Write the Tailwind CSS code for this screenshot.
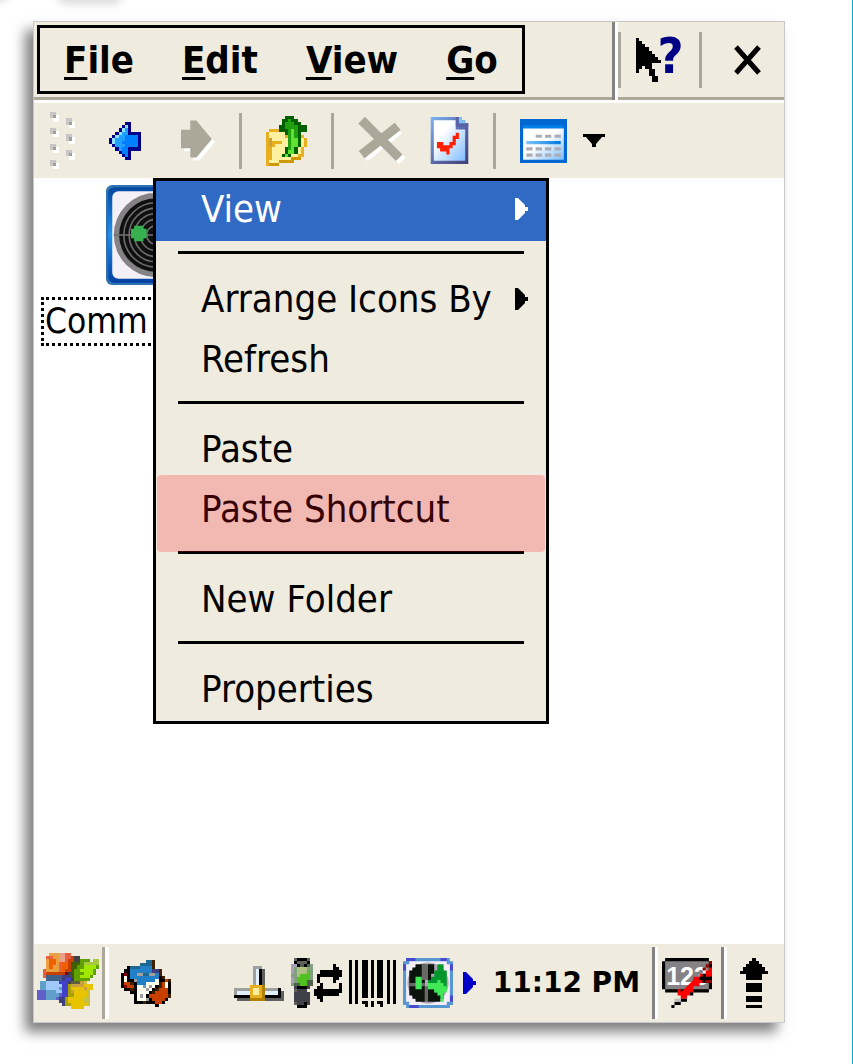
<!DOCTYPE html>
<html lang="en">
<head>
    <meta charset="UTF-8">
    <meta name="viewport" content="width=device-width, initial-scale=1.0">
    <title>File Explorer</title>
    <script src="https://cdn.jsdelivr.net/npm/@tailwindcss/browser@4"></script>
</head>
<body class="relative flex min-h-screen flex-col overflow-x-hidden border-r border-[#00aeef] bg-white font-['DejaVu_Sans_Condensed','DejaVu_Sans',sans-serif] text-black">
    <!-- Soft shadows at the top edge -->
    <div class="absolute -top-3 left-[58px] h-4 w-16 rounded-full bg-black/15 blur-[5px]"></div>
    <div class="absolute -top-3 -left-4 h-3 w-6 rounded-full bg-black/20 blur-[4px]"></div>

    <!-- Device window -->
    <div class="mt-[21px] mr-[67px] mb-[41px] ml-[33px] flex flex-1 flex-col border border-[#c8c8c8] bg-white shadow-[-8px_9px_12px_rgba(0,0,0,0.5)]">

        <!-- Menu bar -->
        <header class="flex h-[81px] shrink-0 border-b-[3px] border-white bg-[#efebde]">
            <div class="flex flex-1 items-start border-b-[3px] border-[#aca899] pt-[3px] pl-[3px]">
                <nav class="flex h-[69px] items-center gap-12 border-[3px] border-black px-6 text-[38px] leading-none font-bold">
                    <button><u class="decoration-[3px] underline-offset-[4px]">F</u>ile</button>
                    <button><u class="decoration-[3px] underline-offset-[4px]">E</u>dit</button>
                    <button><u class="decoration-[3px] underline-offset-[4px]">V</u>iew</button>
                    <button><u class="decoration-[3px] underline-offset-[4px]">G</u>o</button>
                </nav>
            </div>
            <div class="w-[3px] bg-[#848284]"></div>
            <div class="w-[3px] bg-white"></div>
            <div class="flex w-[166px] items-center border-b-[3px] border-[#aca899]">
                <div class="h-14 w-[3px] bg-[#aca899]"></div>
                <button class="flex flex-1 items-center justify-center" aria-label="Help">
                    <svg class="h-[44px] w-[25px]" viewBox="0 0 8 14" preserveAspectRatio="none" shape-rendering="crispEdges">
                        <path d="M0 0h1v1h1v1h1v1h1v1h1v1h1v1h1v1h1v1H5v2h1v2h1v2H5v-2H4v-2H3V9H2v1H1v1H0z"/>
                    </svg>
                    <span class="-ml-1 pb-2 text-[50px] leading-[50px] font-bold text-[#000084]">?</span>
                </button>
                <div class="h-14 w-[3px] bg-[#aca899]"></div>
                <button class="flex w-[82px] justify-center pl-2" aria-label="Close">
                    <svg class="h-[30px] w-[27px]" viewBox="0 0 27 30" fill="none" stroke="#000" stroke-width="5">
                        <path d="M2 2l23 26M25 2L2 28"/>
                    </svg>
                </button>
            </div>
        </header>

        <!-- Toolbar -->
        <div class="flex h-[75px] shrink-0 items-center gap-6 bg-[#efebde] pl-4">
            <svg class="mr-[10px] h-[57px] w-[25px]" viewBox="0 0 8 18" preserveAspectRatio="none" shape-rendering="crispEdges">
                <path fill="#fff" d="M1 1h2v2H1zM1 6h2v2H1zM1 11h2v2H1zM1 16h2v2H1zM6 3h2v2H6zM6 8h2v2H6zM6 13h2v2H6z"/>
                <path fill="#c6c6c6" d="M0 0h2v2H0zM0 5h2v2H0zM0 10h2v2H0zM0 15h2v2H0zM5 2h2v2H5zM5 7h2v2H5zM5 12h2v2H5z"/>
                <path fill="#a09e98" d="M1 1h1v1H1zM1 6h1v1H1zM1 11h1v1H1zM1 16h1v1H1zM6 3h1v1H6zM6 8h1v1H6zM6 13h1v1H6z"/>
            </svg>
            <div class="flex items-center gap-10">
                <button aria-label="Back"><svg class="h-[38px] w-[32px]" data-sprite="back"></svg></button>
                <button aria-label="Forward" disabled>
                    <svg class="h-[41px] w-[34px]" viewBox="0 0 11 13">
                        <path fill="#fff" d="M4 1h2l5 6-5 6H4v-3H1V4h3z"/>
                        <path fill="#aca899" d="M3 0h2l5 6-5 6H3V9H0V3h3z"/>
                    </svg>
                </button>
            </div>
            <div class="h-14 w-[3px] bg-[#aca899]"></div>
            <button aria-label="Up one level"><svg class="h-[50px] w-[41px]" data-sprite="folder"></svg></button>
            <div class="h-14 w-[3px] bg-[#aca899]"></div>
            <button aria-label="Delete" disabled>
                <svg class="h-[47px] w-[48px]" viewBox="0 0 15 15" fill="none" stroke-width="3">
                    <path stroke="#fff" d="M2 2l12 12M13 4L2 13"/>
                    <path stroke="#aca899" d="M1 1l12 12M12.500 3L1 12"/>
                </svg>
            </button>
            <button aria-label="Properties">
                <svg class="h-[47px] w-[39px]" viewBox="0 0 12 15">
                    <defs>
                        <linearGradient id="pageFill" x1="0" y1="0" x2="1" y2="1">
                            <stop offset=".3" stop-color="#fff"/><stop offset="1" stop-color="#80bcff"/>
                        </linearGradient>
                        <linearGradient id="pageEdge" x1="0" y1="0" x2="1" y2="1">
                            <stop offset="0" stop-color="#7cb4f4"/><stop offset=".6" stop-color="#5860a0"/><stop offset="1" stop-color="#404078"/>
                        </linearGradient>
                    </defs>
                    <path fill="url(#pageEdge)" d="M0 0h10v1h1v1h1v13H0z"/>
                    <path fill="url(#pageFill)" d="M1 1h7v3h3v10H1z"/>
                    <path fill="#5860a8" d="M8 0h1v2h3v1H8z"/>
                    <path fill="#80c0f0" d="M9 0h1v1h1v1H9z"/>
                    <path fill="#ff2000" d="M2 8h2v1h2V8h1V6h1V5h1v2H8v2H7v1H6v2H5v-1H3v-1H2z"/>
                </svg>
            </button>
            <div class="h-14 w-[3px] bg-[#aca899]"></div>
            <button class="flex items-center gap-4" aria-label="View style">
                <svg class="h-[44px] w-[47px]" viewBox="0 0 15 14">
                    <defs>
                        <linearGradient id="listFill" x1="0" y1="0" x2="1" y2="1">
                            <stop offset=".45" stop-color="#fff"/><stop offset="1" stop-color="#78bcff"/>
                        </linearGradient>
                        <linearGradient id="listRow">
                            <stop offset="0" stop-color="#80c4f8"/><stop offset="1" stop-color="#0078e0"/>
                        </linearGradient>
                    </defs>
                    <path fill="#0068d0" d="M0 0h15v14H0z"/>
                    <path fill="#0080e8" d="M1 2h13v1H1z"/>
                    <path fill="url(#listFill)" d="M1 3h13v10H1z"/>
                    <path fill="url(#listRow)" d="M2 7h11v1H2z"/>
                    <path fill="#adabb5" d="M5 5h2v1H5zM8 5h2v1H8zM11 5h2v1h-2zM2 9h2v1H2zM5 9h2v1H5zM8 9h2v1H8zM11 9h2v1h-2zM2 11h2v1H2zM5 11h2v1H5zM8 11h2v1H8zM11 11h2v1h-2z"/>
                </svg>
                <svg class="h-[13px] w-[22px]" viewBox="0 0 22 13"><path d="M0 0h22v3h-3l-6 7v3H9v-3L3 3H0z"/></svg>
            </button>
        </div>

        <!-- Desktop area -->
        <main class="relative flex-1">
            <button class="mt-[7px] ml-[7px] block w-[230px]">
                <svg class="mx-auto h-[100px] w-[100px]" viewBox="0 0 32 32">
                    <defs>
                        <linearGradient id="tile" x1="0" y1="0" x2="0" y2="1">
                            <stop offset="0" stop-color="#0048a0"/><stop offset=".5" stop-color="#2090f0"/><stop offset="1" stop-color="#0040a0"/>
                        </linearGradient>
                    </defs>
                    <rect width="32" height="32" rx="2" fill="#3070b0"/>
                    <rect x=".7" y=".7" width="30.6" height="30.6" rx="2" fill="url(#tile)"/>
                    <rect x="2" y="2" width="28" height="28" rx="2" fill="#f4f0f8"/>
                    <circle cx="16" cy="16" r="13.5" fill="#848284"/>
                    <circle cx="16" cy="16" r="11.8" fill="#101010"/>
                    <g fill="none" stroke="#707070" stroke-width=".5">
                        <circle cx="16" cy="16" r="10.3"/><circle cx="16" cy="16" r="8.6"/><circle cx="16" cy="16" r="6.9"/><circle cx="16" cy="16" r="5"/><circle cx="16" cy="16" r="3"/>
                        <path d="M2.5 16h27M16 2.5v27"/>
                    </g>
                    <path fill="#38b050" d="M8 14h1v-1h3v1h1v3h-1v1H9v-1H8z"/>
                </svg>
                <span class="mt-3 block h-[49px] border-[3px] border-dotted border-black pl-px text-left text-[35px] leading-[43px]">Comm</span>
            </button>

            <!-- Context menu -->
            <div role="menu" class="absolute top-0 left-[119px] w-[396px] border-[3px] border-black bg-[#efebde] text-[38px] leading-none">
                <button role="menuitem" class="flex h-[60px] w-full items-center justify-between bg-[#316ac5] pr-[18px] pb-1 pl-[45px] text-white">View
                    <svg class="h-[22px] w-[13px]" viewBox="0 0 13 22" fill="currentColor"><path d="M0 0h3l7 7v2h3v4h-3v2l-7 7H0z"/></svg>
                </button>
                <hr class="mx-[22px] mt-[10px] mb-[17px] border-t-[3px] border-black">
                <button role="menuitem" class="flex h-[60px] w-full items-center justify-between pr-[18px] pb-1 pl-[45px]">Arrange Icons By
                    <svg class="h-[22px] w-[13px]" viewBox="0 0 13 22" fill="currentColor"><path d="M0 0h3l7 7v2h3v4h-3v2l-7 7H0z"/></svg>
                </button>
                <button role="menuitem" class="flex h-[60px] w-full items-center pb-1 pl-[45px]">Refresh</button>
                <hr class="mx-[22px] mt-[10px] mb-[17px] border-t-[3px] border-black">
                <button role="menuitem" class="flex h-[60px] w-full items-center pb-1 pl-[45px]">Paste</button>
                <button role="menuitem" class="relative flex h-[60px] w-full items-center pb-1 pl-[45px]">Paste Shortcut
                    <span class="absolute inset-x-px -top-[6px] -bottom-[11px] rounded bg-[#fb0010]/21"></span>
                </button>
                <hr class="mx-[22px] mt-[10px] mb-[17px] border-t-[3px] border-black">
                <button role="menuitem" class="flex h-[60px] w-full items-center pb-1 pl-[45px]">New Folder</button>
                <hr class="mx-[22px] mt-[10px] mb-[17px] border-t-[3px] border-black">
                <button role="menuitem" class="flex h-[60px] w-full items-center pb-1 pl-[45px]">Properties</button>
            </div>
        </main>

        <!-- Taskbar -->
        <footer class="flex h-[78px] shrink-0 items-center bg-[#efebde] pl-[3px]">
            <button aria-label="Start"><svg class="mb-1 h-[56px] w-[62px]" data-sprite="start"></svg></button>
            <div class="ml-[3px] h-[72px] w-[7px] border-r-4 border-l-[3px] border-r-white border-l-[#aca899]"></div>
            <button class="ml-3" aria-label="Sync"><svg class="h-[47px] w-[50px]" data-sprite="sync"></svg></button>
            <div class="ml-auto flex items-center gap-[7px]">
                <svg class="h-[35px] w-[50px]" data-sprite="network"></svg>
                <svg class="h-[50px] w-[22px]" data-sprite="phone"></svg>
                <svg class="-ml-[6px] h-[38px] w-[28px]" data-sprite="swap"></svg>
                <svg class="h-[47px] w-[47px]" viewBox="0 0 15 15" shape-rendering="crispEdges">
                    <path d="M0 0h1v14H0zM2 0h1v14H2zM4 0h2v12H4zM7 0h1v12H7zM9 0h2v12H9zM12 0h1v14h-1zM14 0h1v14h-1zM4 13h2v2H5v-1H4zM7 13h1v2H7zM9 13h2v2h-1v-1H9z"/>
                </svg>
                <svg class="h-[50px] w-[50px]" viewBox="0 0 16 16">
                    <path fill="#5898d0" d="M1 0h14v1h1v14h-1v1H1v-1H0V1h1z"/>
                    <path fill="#4848d0" d="M1 0h3v1H1zM12 0h2v1h-2zM0 2h1v2H0zM15 2h1v2h-1zM15 12h1v2h-1zM2 15h3v1H2z"/>
                    <path fill="#f4eef8" d="M2 1h12v1h1v12h-1v1H2v-1H1V2h1z"/>
                    <circle cx="8" cy="8" r="6.600" fill="#b0a8b4"/>
                    <path fill="#0c120c" d="M4 2h3v12H4v-1H3v-1H2V4h1V3h1zM8 7h2v3h2v1h1v2h-1v1H8z"/>
                    <path fill="#0c120c" d="M8 2h2v3H9v2H8z"/>
                    <path fill="#00982c" d="M11 2h2v2h1v6h-1v3h-1v-2h-2v-1H8V7h1V6h1V4h1z"/>
                    <path fill="#40e858" d="M11 7h1v1h1v1h1v2h-1v3h-1v-2h-1v-1h-1v-1H8V8h3z"/>
                    <path fill="#686868" d="M2 8h5v1H2zM6 2h2v5H6zM7 9h1v5H7z"/>
                    <path fill="#40e858" d="M4 6h2v4H4z"/>
                </svg>
                <svg class="ml-[3px] h-[22px] w-[13px]" viewBox="0 0 13 22" fill="#0000c8"><path d="M0 0h3l7 7v2h3v4h-3v2l-7 7H0z"/></svg>
            </div>
            <time class="ml-[17px] text-[28px] leading-none font-bold font-['DejaVu_Sans']">11:12 PM</time>
            <div class="ml-3 h-[72px] w-[6px] border-r-[3px] border-l-[3px] border-r-white border-l-[#848284]"></div>
            <button class="ml-1" aria-label="Input panel">
                <svg class="h-[50px] w-[50px]" viewBox="0 0 48 48">
                    <path d="M3 0h42v3h3v27h-3v3H3v-3H0V3h3z"/>
                    <path fill="#848284" d="M3 3h42v27H3z"/>
                    <text x="4" y="26" font-size="24" font-weight="bold" font-family="Liberation Sans" fill="#fff">123</text>
                    <g transform="scale(3)">
                        <path fill="#ff0000" d="M5 10h1v1l4-4V6h2V5h2V4h1V3h1v3h-2v2h-2v1h-2v2H9v1H8v1H6v-1H5z"/>
                        <path d="M12 6h1V5h1v1h2v1h-2v1h-1V7h-1zM6 13h2v1H6v1H4v1H3v-1h1v-1h2zM9 11h1v1H9z"/>
                        <path fill="#900000" d="M15 1h1v1h-1v1h-1v1h-1V3h1V2h1zM14 7h2v1h-2z"/>
                        <path fill="#c0c0c0" d="M4 13h2v1H4z"/>
                    </g>
                </svg>
            </button>
            <div class="ml-[9px] h-[72px] w-[6px] border-r-[3px] border-l-[3px] border-r-white border-l-[#848284]"></div>
            <button class="mr-4 ml-[13px]" aria-label="Show desktop">
                <svg class="h-[50px] w-[28px]" viewBox="0 0 9 16" preserveAspectRatio="none" shape-rendering="crispEdges">
                    <path d="M4 0h1v1h1v1h1v1h1v1h1v1H7v2H2V5H0V4h1V3h1V2h1V1h1zM2 8h5v3H2zM2 12h5v2H2zM2 15h5v1H2z"/>
                </svg>
            </button>
        </footer>
    </div>

    <script>
        // One letter per colour, shared by all sprites
        const palette = {
            a: '#e86040', b: '#e8a040', c: '#e8a088', d: '#f06000', e: '#c84000', r: '#800000',
            k: '#404048', g: '#406000', h: '#60a000', l: '#a0e800', m: '#a8c840',
            y: '#e8c400', z: '#c8c040', o: '#a8a000', p: '#c8a040', n: '#606040',
            B: '#4040c8', N: '#404080', s: '#60a0c8', t: '#a0c8f8', v: '#6060c8', w: '#406088',
            K: '#000000', q: '#402000', u: '#2080c8', U: '#206890', W: '#fffff0', O: '#c84000', G: '#a0a0a0',
            L: '#a09fa0', i: '#e0f0ff', D: '#606060', Y: '#e8b020', T: '#fff0a0', j: '#b08000', J: '#d09800',
            A: '#006000', E: '#20a010', F: '#60e030',
            x: '#000088', P: '#20a0ff', Q: '#90e0ff', H: '#0080ff',
            1: '#506050', 2: '#80a080', 3: '#50c020', 4: '#b0c080', 5: '#a8a0b8'
        };

        const sprites = {
            back: [
                '.....xx...', '....xQx...', '...xQPx...', '..xQPPxxxx', '.xQPPHHHHx', 'xQPPPHHHHx',
                'xQPPHHHHHx', '.xPPPHHHHx', '..xPHHxxxx', '...xHHx...', '....xHx...', '.....xx...'
            ],
            folder: [
                '......AAA....', '.....AAEAA...', '.....AEEEAA..', '....AAEEEEAAA', '.YYYAAAEFEAAA', 'YTTTTTAEFEA..',
                'YTTTTTYEFEAY.', 'YpTTTTTEFFATY', 'YpYYYTTEFFATY', 'YpYTTTTEFFATY', 'YYTTTTAEFATY.', 'YYTTTTAFFATY.',
                'YYTTTAFATTYY.', 'YYTTTTTTJJJ..', 'YTTTJJJJJ....', 'YJJJ.........'
            ],
            start: [
                '....bbbccaa.........', '...aabbccaaekk......', '...bddbccaeekkhhh.mm', '...bddbaddeggghmmmmm',
                '...bdbbaddegghhllllh', '..abbbbadeeghhllllh.', '..aeeeeeerkghhhlllh.', '..awwwwwNNNghhlllh..',
                '...wwwwwNBBkhhhhh...', '.ssttttBBBknnnpz....', '.sstttttBBoppppyyy..', '.ssttttsBBoyyyypyy..',
                'vvvsssttBBopyyyyz...', 'vvvssssvBBooyyyyz...', 'vvvsssvNNoyyyyyzz...', '.......NNoyyyyyzz...',
                '........Nooyyyyyz...', '...........yyyy.....'
            ],
            sync: [
                '........UUq.....', '......UUUUq.....', '..KUUUuuuuq.....', '.KKuuuuuuuNNq...', 'KrKuuGGUUGGuq...',
                'KWKuuuuuuuuuKq..', 'KWKKGuuuuuuWKKOq', 'KOOqKuuuWWWWqOWK', 'KrOOKWWsWGWKqOWK', '.KKqKWWWGWKqOOOK',
                '...KKWWWWKqOOOOK', '....KWGWKOOOOOOq', '....KWWWGKOOOOK.', '....KKKqKKKOOK..', '...........K....'
            ],
            network: [
                '......LLL.......', '......LiKD......', '......LiKD......', '......LiKD......', '......LiKD......',
                '......LiKD......', '.....YYYYj......', 'LLLLLYTTYjLLLLK.', 'LiiiiYTTYjiiiiKD', 'KKKKKYYYYjKKKKKD',
                '.DDDDjjjjjDDDDDD'
            ],
            phone: [
                '.DKKKD.', '.KDDDK.', '55K1K12', '5244422', '5244432', '2243332', '5233332', '5233311',
                '2113311', '.kKKKk.', '.Dkkk..', '.kkkkk.', '.kkkkk.', '.kkkkk.', '.DkkKk.', '..KKK..'
            ],
            swap: [
                '......K..', '......KK.', '..KKKKKKK', '.KKKKKKKK', '.K....KK.', '.K....K..',
                '..K.....K', '.KK.....K', 'KKKKKKKKK', 'KKKKKKKK.', '.KK......', '..K......'
            ]
        };

        document.querySelectorAll('[data-sprite]').forEach(svg => {
            const rows = sprites[svg.dataset.sprite];
            svg.setAttribute('viewBox', `0 0 ${rows[0].length} ${rows.length}`);
            svg.setAttribute('preserveAspectRatio', 'none');
            svg.setAttribute('shape-rendering', 'crispEdges');
            svg.innerHTML = rows.map((row, y) => [...row].map((ch, x) =>
                ch === '.' ? '' : `<rect x="${x}" y="${y}" width="1" height="1" fill="${palette[ch]}"/>`
            ).join('')).join('');
        });
    </script>
</body>
</html>
